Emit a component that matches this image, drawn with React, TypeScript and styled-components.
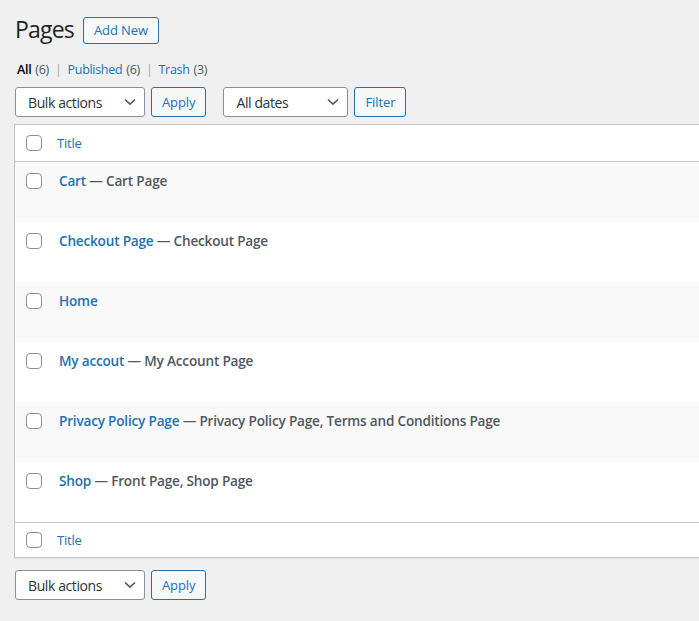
import React from "react";
import styled, { createGlobalStyle } from "styled-components";

const Global = createGlobalStyle`
  html, body { margin: 0; padding: 0; }
  body {
    background: #f0f0f1;
    font-family: "Open Sans", "Noto Sans", sans-serif;
    color: #3c434a;
    font-size: 13px;
    overflow: hidden;
  }
  * { box-sizing: border-box; }
`;

const Wrap = styled.div`
  padding: 12px 0 0 15px;
  width: 760px;
`;

const HeadingRow = styled.div`
  display: flex;
  align-items: center;
  gap: 9px;
  height: 36px;
`;

const H1 = styled.h1`
  margin: 0;
  font-size: 23px;
  font-weight: 400;
  color: #1d2327;
  line-height: 1.3;
  letter-spacing: -0.8px;
`;

const OutlineButton = styled.button<{ $h?: number }>`
  height: ${(p) => p.$h ?? 30}px;
  padding: 0 10px;
  border: 1px solid #2271b1;
  border-radius: 3px;
  background: #f6f7f7;
  color: #2271b1;
  font-family: inherit;
  font-size: 13px;
  letter-spacing: -0.1px;
  cursor: pointer;
`;

const SubNav = styled.ul`
  list-style: none;
  margin: 12px 0 0 2px;
  padding: 0;
  display: flex;
  align-items: center;
  height: 18px;
  font-size: 12.5px;
  letter-spacing: -0.3px;
`;

const SubItem = styled.li`
  display: flex;
  align-items: center;
`;

const SubLink = styled.span<{ $current?: boolean }>`
  color: ${(p) => (p.$current ? "#000" : "#2271b1")};
  font-weight: ${(p) => (p.$current ? 600 : 400)};
`;

const Count = styled.span`
  color: #50575e;
  margin-left: 4px;
`;

const Sep = styled.span`
  color: #a7aaad;
  margin: 0 6px;
`;

const Nav = styled.div<{ $mt: number }>`
  display: flex;
  align-items: center;
  margin-top: ${(p) => p.$mt}px;
  height: 30px;
`;

const Group = styled.div`
  display: flex;
  align-items: center;
  gap: 6px;
  margin-right: 17px;
`;

const Select = styled.div<{ $w: number }>`
  width: ${(p) => p.$w}px;
  height: 30px;
  border: 1px solid #8c8f94;
  border-radius: 3px;
  background: #fff;
  display: flex;
  align-items: center;
  justify-content: space-between;
  padding: 0 8px 0 12px;
  font-size: 14px;
  color: #2c3338;
  letter-spacing: -0.4px;
`;

const Chevron = () => (
  <svg width="12" height="8" viewBox="0 0 12 8">
    <path d="M1 1.5 L6 6.2 L11 1.5" fill="none" stroke="#50575e" strokeWidth="1.6" />
  </svg>
);

const Table = styled.div`
  margin: 7px 0 0 -1px;
  width: 760px;
  background: #fff;
  border: 1px solid #c3c4c7;
  box-shadow: 0 1px 1px rgba(0, 0, 0, 0.04);
`;

const HeadRow = styled.div<{ $top?: boolean }>`
  display: flex;
  align-items: center;
  height: ${(p) => (p.$top ? 37 : 35)}px;
  ${(p) =>
    p.$top ? "border-bottom: 1px solid #c3c4c7;" : "border-top: 1px solid #c3c4c7;"}
`;

const CheckCell = styled.div`
  width: 42px;
  padding-left: 11px;
  flex: none;
`;

const Checkbox = styled.span`
  display: block;
  width: 16px;
  height: 16px;
  border: 1px solid #8c8f94;
  border-radius: 4px;
  background: #fff;
`;

const HeadTitle = styled.span`
  color: #2271b1;
  font-size: 13px;
  letter-spacing: -0.2px;
`;

const Row = styled.div<{ $alt: boolean }>`
  display: flex;
  align-items: flex-start;
  height: 60px;
  padding-top: 11px;
  background: ${(p) => (p.$alt ? "#f9f9f9" : "#fff")};
`;

const TitleCell = styled.div`
  padding-left: 2px;
  font-size: 13.6px;
  font-weight: 600;
  line-height: 16px;
  letter-spacing: -0.2px;
  color: #50575e;
`;

const RowLink = styled.span`
  color: #2271b1;
`;

const pages = [
  { title: "Cart", state: "Cart Page" },
  { title: "Checkout Page", state: "Checkout Page" },
  { title: "Home", state: "" },
  { title: "My accout", state: "My Account Page" },
  { title: "Privacy Policy Page", state: "Privacy Policy Page, Terms and Conditions Page" },
  { title: "Shop", state: "Front Page, Shop Page" },
];

const BulkGroup = () => (
  <Group>
    <Select $w={130}>
      Bulk actions
      <Chevron />
    </Select>
    <OutlineButton>Apply</OutlineButton>
  </Group>
);

export default function App() {
  return (
    <>
      <Global />
      <Wrap>
        <HeadingRow>
          <H1>Pages</H1>
          <OutlineButton $h={27}>Add New</OutlineButton>
        </HeadingRow>
        <SubNav>
          <SubItem>
            <SubLink $current>All</SubLink>
            <Count>(6)</Count>
            <Sep>|</Sep>
          </SubItem>
          <SubItem>
            <SubLink>Published</SubLink>
            <Count>(6)</Count>
            <Sep>|</Sep>
          </SubItem>
          <SubItem>
            <SubLink>Trash</SubLink>
            <Count>(3)</Count>
          </SubItem>
        </SubNav>
        <Nav $mt={9}>
          <BulkGroup />
          <Group>
            <Select $w={125}>
              All dates
              <Chevron />
            </Select>
            <OutlineButton>Filter</OutlineButton>
          </Group>
        </Nav>
        <Table>
          <HeadRow $top>
            <CheckCell>
              <Checkbox />
            </CheckCell>
            <HeadTitle>Title</HeadTitle>
          </HeadRow>
          {pages.map((p, i) => (
            <Row key={p.title} $alt={i % 2 === 0}>
              <CheckCell>
                <Checkbox />
              </CheckCell>
              <TitleCell>
                <RowLink>{p.title}</RowLink>
                {p.state && ` — ${p.state}`}
              </TitleCell>
            </Row>
          ))}
          <HeadRow>
            <CheckCell>
              <Checkbox />
            </CheckCell>
            <HeadTitle>Title</HeadTitle>
          </HeadRow>
        </Table>
        <Nav $mt={12}>
          <BulkGroup />
        </Nav>
      </Wrap>
    </>
  );
}
